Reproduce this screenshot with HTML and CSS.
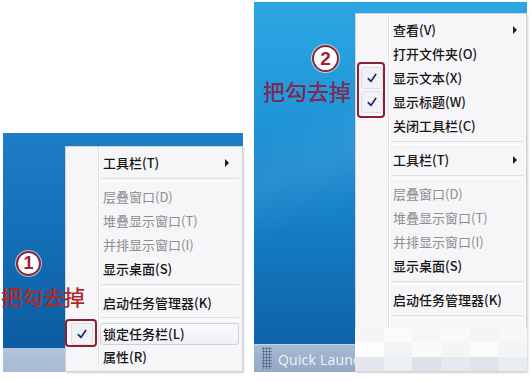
FILE: index.html
```html
<!DOCTYPE html>
<html lang="zh-CN">
<head>
<meta charset="utf-8">
<title>任务栏菜单</title>
<link rel="stylesheet" href="styles.css">
</head>
<body>
<div class="stage">
  <section class="panel panel-left">
    <div class="desktop desktop-left"></div>
    <div class="taskbar taskbar-left"></div>

    <ul class="menu menu-left">
      <li class="item"><span class="gut"></span><span class="body"><span class="label">工具栏(T)</span><span class="arrow"></span></span></li>
      <li class="sep"></li>
      <li class="item off"><span class="gut"></span><span class="body"><span class="label">层叠窗口(D)</span></span></li>
      <li class="item off"><span class="gut"></span><span class="body"><span class="label">堆叠显示窗口(T)</span></span></li>
      <li class="item off"><span class="gut"></span><span class="body"><span class="label">并排显示窗口(I)</span></span></li>
      <li class="item"><span class="gut"></span><span class="body"><span class="label">显示桌面(S)</span></span></li>
      <li class="sep"></li>
      <li class="item"><span class="gut"></span><span class="body"><span class="label">启动任务管理器(K)</span></span></li>
      <li class="sep sep-short"></li>
      <li class="item item-short hot"><span class="gut"><span class="checkbox"><svg viewBox="0 0 10 10" class="tick"><path d="M1.3 5.6 L3.9 8.4 L8.7 1.4"/></svg></span></span><span class="body"><span class="label">锁定任务栏(L)</span></span></li>
      <li class="item"><span class="gut"></span><span class="body"><span class="label">属性(R)</span></span></li>
    </ul>

    <div class="badge badge-one">1</div>
    <div class="note note-left">把勾去掉</div>
    <div class="ring ring-left"></div>
  </section>

  <section class="panel panel-right">
    <div class="desktop desktop-right"></div>
    <div class="taskbar taskbar-right">
      <span class="grip"></span>
      <span class="ql">Quick Launc</span>
    </div>

    <ul class="menu menu-right">
      <li class="item"><span class="gut"></span><span class="body"><span class="label">查看(V)</span><span class="arrow"></span></span></li>
      <li class="item"><span class="gut"></span><span class="body"><span class="label">打开文件夹(O)</span></span></li>
      <li class="item"><span class="gut"><span class="checkbox"><svg viewBox="0 0 10 10" class="tick"><path d="M1.3 5.6 L3.9 8.4 L8.7 1.4"/></svg></span></span><span class="body"><span class="label">显示文本(X)</span></span></li>
      <li class="item"><span class="gut"><span class="checkbox"><svg viewBox="0 0 10 10" class="tick"><path d="M1.3 5.6 L3.9 8.4 L8.7 1.4"/></svg></span></span><span class="body"><span class="label">显示标题(W)</span></span></li>
      <li class="item"><span class="gut"></span><span class="body"><span class="label">关闭工具栏(C)</span></span></li>
      <li class="sep"></li>
      <li class="item"><span class="gut"></span><span class="body"><span class="label">工具栏(T)</span><span class="arrow"></span></span></li>
      <li class="sep"></li>
      <li class="item off"><span class="gut"></span><span class="body"><span class="label">层叠窗口(D)</span></span></li>
      <li class="item off"><span class="gut"></span><span class="body"><span class="label">堆叠显示窗口(T)</span></span></li>
      <li class="item off"><span class="gut"></span><span class="body"><span class="label">并排显示窗口(I)</span></span></li>
      <li class="item"><span class="gut"></span><span class="body"><span class="label">显示桌面(S)</span></span></li>
      <li class="sep"></li>
      <li class="item"><span class="gut"></span><span class="body"><span class="label">启动任务管理器(K)</span></span></li>
      <li class="sep"></li>
      <li class="mosaic">
        <span class="tile t1"></span><span class="tile t2"></span><span class="tile t3"></span><span class="tile t4"></span><span class="tile t5"></span><span class="tile t6"></span>
        <span class="tile t7"></span><span class="tile t8"></span><span class="tile t9"></span><span class="tile t10"></span><span class="tile t11"></span><span class="tile t12"></span>
        <span class="tile t13"></span><span class="tile t14"></span><span class="tile t15"></span><span class="tile t16"></span><span class="tile t17"></span><span class="tile t18"></span>
      </li>
    </ul>

    <div class="badge badge-two">2</div>
    <div class="note note-right">把勾去掉</div>
    <div class="ring ring-right"></div>
  </section>
</div>
</body>
</html>
```

FILE: styles.css
```css
* { box-sizing: border-box; }

html, body {
  margin: 0;
  padding: 0;
  background: #ffffff;
}

body {
  width: 532px;
  height: 382px;
  overflow: hidden;
  font-family: "Noto Sans CJK SC", "Noto Sans", sans-serif;
}

.stage {
  display: flex;
  align-items: flex-start;
}

.panel {
  position: relative;
  display: flex;
  flex-direction: column;
}

.panel-left {
  margin-left: 3px;
  margin-top: 133px;
  width: 240px;
}

.panel-right {
  margin-left: 11px;
  margin-top: 2px;
  width: 273px;
}

.desktop-left {
  height: 215px;
  background: linear-gradient(180deg, #1d7dc6 0%, #1470b8 45%, #0c5c9f 100%);
}

.desktop-right {
  height: 342px;
  background:
    linear-gradient(160deg, rgba(255,255,255,0) 30%, rgba(255,255,255,0.07) 42%, rgba(255,255,255,0) 55%),
    linear-gradient(180deg, #2ba7e3 0%, #2198d9 30%, #1682c8 60%, #0e63a8 100%);
}

.taskbar-left {
  height: 24px;
  background: linear-gradient(180deg, #b2c4da 0%, #a6bad4 100%);
}

.taskbar-right {
  height: 28px;
  background: linear-gradient(180deg, #a7bad3 0%, #93a8c5 100%);
  border-top: 1px solid #c4d2e4;
  display: flex;
  align-items: flex-end;
  padding-left: 8px;
  padding-bottom: 2px;
}

.grip {
  width: 10px;
  height: 22px;
  margin-right: 6px;
  margin-bottom: 1px;
  background-image: radial-gradient(circle, #4e6688 0.9px, transparent 1.2px);
  background-size: 3px 3px;
}

.ql {
  font-family: "Open Sans", "Noto Sans", sans-serif;
  font-size: 14px;
  line-height: 20px;
  color: #eef3f9;
  letter-spacing: 0.2px;
}

/* menus */
.menu {
  position: absolute;
  margin: 0;
  padding: 4px 0 0 0;
  list-style: none;
  background-color: #f6f5f7;
  background-image: linear-gradient(90deg, transparent 32px, #e0e0e2 32px, #e0e0e2 33px, #ffffff 33px, #ffffff 34px, transparent 34px);
  border: 1px solid #d4d4d8;
  box-shadow: 1px 1px 2px rgba(0,0,0,0.18);
  display: flex;
  flex-direction: column;
  font-size: 13px;
  color: #161616;
}

.menu-left {
  left: 62px;
  top: 13px;
  width: 178px;
  height: 226px;
}

.menu-right {
  left: 101px;
  top: 11px;
  width: 172px;
  height: 359px;
}

.item {
  display: flex;
  height: 24px;
  align-items: stretch;
}

.item-short { height: 22px; }

.gut {
  width: 33px;
  flex: none;
  display: flex;
  align-items: center;
  justify-content: center;
  padding-right: 2px;
}

.body {
  flex: 1;
  display: flex;
  align-items: center;
  padding-left: 4px;
}

.label {
  line-height: 16px;
  white-space: nowrap;
  font-weight: 500;
}

.off .label { color: #8e8e90; font-weight: 400; }

.hot .body {
  margin-left: 1px;
  margin-right: 3px;
  padding-left: 2px;
  border: 1px solid #cdd3dd;
  border-radius: 3px;
  background: linear-gradient(180deg, #f9fafc 0%, #eef1f5 100%);
}

.arrow {
  margin-left: auto;
  width: 0;
  height: 0;
  border-left: 4px solid #1c1c1c;
  border-top: 4px solid transparent;
  border-bottom: 4px solid transparent;
}

.menu-left .arrow { margin-right: 13px; }
.menu-right .arrow { margin-right: 9px; }

.checkbox {
  width: 22px;
  height: 22px;
  border: 1px solid #dcdfe6;
  border-radius: 3px;
  background: #f1f2f6;
  display: flex;
  align-items: center;
  justify-content: center;
}

.tick {
  width: 10px;
  height: 10px;
  fill: none;
  stroke: #1e2d6a;
  stroke-width: 1.7;
  stroke-linecap: round;
  stroke-linejoin: round;
}

.sep {
  height: 10px;
  display: flex;
  align-items: center;
  padding-left: 35px;
  padding-right: 3px;
}

.sep-short { height: 8px; }

.sep::after {
  content: "";
  flex: 1;
  height: 2px;
  border-top: 1px solid #dfdfe2;
  border-bottom: 1px solid #ffffff;
}

.mosaic {
  flex: 1;
  display: grid;
  grid-template-columns: repeat(6, 1fr);
  grid-template-rows: repeat(3, 1fr);
  margin-top: 6px;
  margin-left: -1px;
  margin-right: -1px;
}

.tile { background: #f7f7f8; }
.t1 { background: #f5f4f6; }
.t2 { background: #fbfbfc; }
.t3 { background: #f6f6f7; }
.t4 { background: #f9f8fa; }
.t5 { background: #f4f4f5; }
.t6 { background: #f7f7f8; }
.t7 { background: #fdfdfd; }
.t8 { background: #f3f3f4; }
.t9 { background: #fafafb; }
.t10 { background: #f5f5f6; }
.t11 { background: #fbfbfb; }
.t12 { background: #f4f4f5; }
.t13 { background: #e4e8ee; }
.t14 { background: #eceff3; }
.t15 { background: #dde2ea; }
.t16 { background: #e6e9ef; }
.t17 { background: #dfe4eb; }
.t18 { background: #e9ecf1; }

/* annotations */
.badge {
  position: absolute;
  border-radius: 50%;
  background: #ffffff;
  border: 2px solid #8f2434;
  color: #a4212f;
  font-family: "Liberation Sans", "DejaVu Sans", sans-serif;
  font-weight: bold;
  display: flex;
  align-items: center;
  justify-content: center;
  box-shadow: 0 0 0 1px rgba(255,255,255,0.6);
}

.badge-one {
  left: 13px;
  top: 118px;
  width: 25px;
  height: 25px;
  font-size: 18px;
}

.badge-two {
  left: 58px;
  top: 43px;
  width: 27px;
  height: 27px;
  font-size: 19px;
}

.note {
  position: absolute;
  font-family: "Noto Sans CJK SC", sans-serif;
  font-weight: 500;
  white-space: nowrap;
}

.note-left {
  left: -2px;
  top: 151px;
  font-size: 21px;
  line-height: 24px;
  color: #b0282c;
}

.note-right {
  left: 9px;
  top: 76px;
  font-size: 22px;
  line-height: 24px;
  color: #7e2a56;
}

.ring {
  position: absolute;
  border: 2px solid #8e1f33;
  border-radius: 4px;
}

.ring-left {
  left: 62px;
  top: 186px;
  width: 32px;
  height: 28px;
}

.ring-right {
  left: 103px;
  top: 60px;
  width: 28px;
  height: 56px;
}
```
